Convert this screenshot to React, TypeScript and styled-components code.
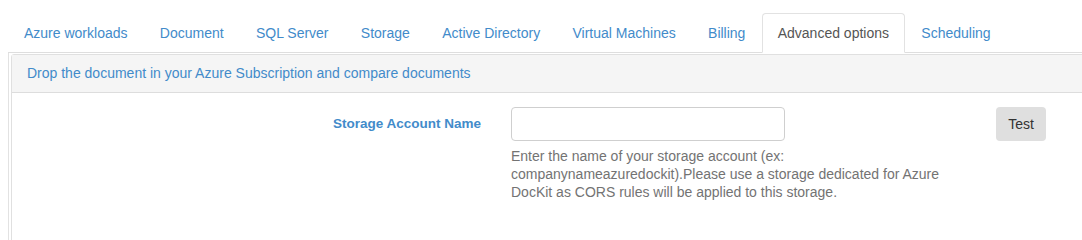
import React from "react";
import styled, { createGlobalStyle } from "styled-components";

const GlobalStyle = createGlobalStyle`
  html, body {
    margin: 0;
    padding: 0;
    background: #ffffff;
    overflow: hidden;
  }
  body {
    font-family: "Liberation Sans", Arial, sans-serif;
    font-size: 14px;
    color: #333;
  }
  * { box-sizing: border-box; }
`;

const Page = styled.div`
  padding: 13px 0 0 8px;
  width: 1110px;
`;

const TabList = styled.ul`
  display: flex;
  list-style: none;
  margin: 0;
  padding: 0;
  border-bottom: 1px solid #dedede;
`;

const TabItem = styled.li<{ $active?: boolean }>`
  margin: 0 0.3px -1px 0;
  padding: 10px 15px;
  line-height: 18px;
  font-size: 14px;
  border: 1px solid ${(p) => (p.$active ? "#e2e2e2" : "transparent")};
  border-bottom-color: ${(p) => (p.$active ? "#ffffff" : "transparent")};
  border-radius: 4px 4px 0 0;
  background: ${(p) => (p.$active ? "#ffffff" : "transparent")};
  color: ${(p) => (p.$active ? "#555555" : "#428bca")};
  white-space: nowrap;
`;

const TabContent = styled.div`
  border-left: 1px solid #e2e2e2;
  border-right: 1px solid #e2e2e2;
  padding: 1px 2px 0 2px;
`;

const Panel = styled.div`
  border: 1px solid #e0e0e0;
  border-radius: 3px;
  height: 240px;
`;

const PanelHeading = styled.div`
  background: #f5f5f5;
  border-bottom: 1px solid #dddddd;
  padding: 9px 15px 10px;
  line-height: 18px;
  color: #428bca;
  font-size: 14px;
`;

const PanelBody = styled.div`
  padding: 14px 15px;
`;

const FormRow = styled.div`
  display: flex;
  align-items: flex-start;
`;

const Label = styled.label`
  width: 454px;
  text-align: right;
  font-weight: bold;
  font-size: 13.5px;
  color: #428bca;
  line-height: 34px;
`;

const Field = styled.div`
  margin-left: 30px;
  width: 450px;
  display: flex;
  flex-direction: column;
`;

const Input = styled.input`
  width: 274px;
  height: 34px;
  border: 1px solid #cfcfcf;
  border-radius: 4px;
  padding: 6px 12px;
  font-family: inherit;
  font-size: 14px;
  outline: none;
`;

const Help = styled.p`
  margin: 6px 0 0;
  font-size: 14px;
  line-height: 18px;
  color: #737373;
`;

const Button = styled.button`
  margin-left: 35px;
  width: 50px;
  height: 34px;
  border: none;
  border-radius: 4px;
  background: #dfdfdf;
  color: #333;
  font-family: inherit;
  font-size: 14px;
  padding: 0;
`;

const tabs = [
  "Azure workloads",
  "Document",
  "SQL Server",
  "Storage",
  "Active Directory",
  "Virtual Machines",
  "Billing",
  "Advanced options",
  "Scheduling",
];

export default function App() {
  return (
    <>
      <GlobalStyle />
      <Page>
        <TabList>
          {tabs.map((t) => (
            <TabItem key={t} $active={t === "Advanced options"}>
              {t}
            </TabItem>
          ))}
        </TabList>
        <TabContent>
          <Panel>
            <PanelHeading>
              Drop the document in your Azure Subscription and compare documents
            </PanelHeading>
            <PanelBody>
              <FormRow>
                <Label>Storage Account Name</Label>
                <Field>
                  <Input type="text" />
                  <Help>
                    Enter the name of your storage account (ex:
                    companynameazuredockit).Please use a storage dedicated for
                    Azure DocKit as CORS rules will be applied to this storage.
                  </Help>
                </Field>
                <Button>Test</Button>
              </FormRow>
            </PanelBody>
          </Panel>
        </TabContent>
      </Page>
    </>
  );
}
